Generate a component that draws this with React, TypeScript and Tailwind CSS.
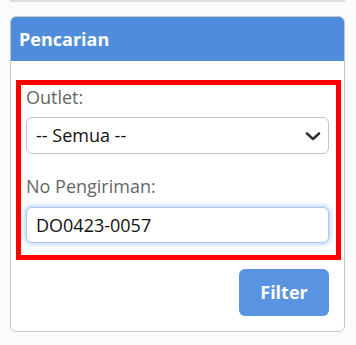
import React from "react";

export default function App() {
  return (
    <div
      className="w-[356px] h-[345px] bg-[#fbfbfb] pl-[10px] pr-[11px] overflow-hidden"
      style={{ fontFamily: '"Open Sans", "Noto Sans", sans-serif' }}
    >
      <div className="h-[2px] bg-[#dedede]" />
      <div className="mt-[14px] border border-[#c6c6c6] rounded-[6px] bg-white overflow-hidden">
        <div className="h-[44px] bg-[#4f8ddc] flex items-center pl-[8px]">
          <span className="text-white font-bold text-[18px] leading-none">Pencarian</span>
        </div>
        <div className="pt-[19px] pl-[5px] pr-[3px]">
          <div className="border-[5px] border-[#ff0000] px-[5px] pt-0 pb-[12px]">
            <div className="text-[18px] leading-[24px] text-[#666666]">Outlet:</div>
            <div className="mt-[8px] mr-[2px] h-[37px] border border-[#c4c4c4] rounded-[6px] bg-white flex items-center justify-between pl-[9px] pr-[7px]">
              <span className="text-[18px] text-[#111]">-- Semua --</span>
              <svg width="16" height="10" viewBox="0 0 16 10" fill="none">
                <path d="M2 2.5l6 5.5 6-5.5" stroke="#333" strokeWidth="2.6" strokeLinecap="round" strokeLinejoin="round" />
              </svg>
            </div>
            <div className="mt-[20px] text-[18px] leading-[24px] text-[#666666]">No Pengiriman:</div>
            <div className="mt-[9px] mr-[2px] h-[36px] border border-[#a9c8ee] rounded-[6px] bg-white flex items-center pl-[9px] shadow-[0_0_4px_2px_rgba(150,190,240,0.55)]">
              <span className="text-[18px] text-[#111]">DO0423-0057</span>
            </div>
          </div>
          <div className="flex justify-end pr-[12px] pt-[9px] pb-[15px]">
            <button className="w-[90px] h-[47px] rounded-[6px] bg-[#5994e0] text-white font-bold text-[18px]">
              Filter
            </button>
          </div>
        </div>
      </div>
    </div>
  );
}
